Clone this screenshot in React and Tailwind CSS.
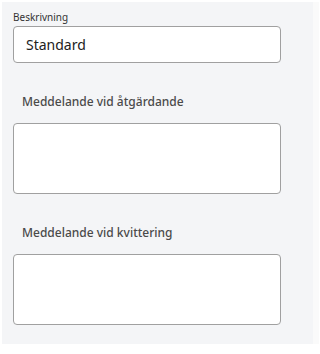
import React from 'react';

const font = { fontFamily: '"Segoe UI", "Noto Sans", "Open Sans", sans-serif' };

const MessageField = ({ label }) => (
  <div className="mt-[30px]">
    <div className="pl-[9px] text-[12px] font-medium leading-[18px] text-[#4a4a4a]">{label}</div>
    <textarea className="mt-[12px] block h-[71px] w-[268px] resize-none rounded-[4px] border border-[#a0a0a0] bg-white" />
  </div>
);

export default function App() {
  return (
    <div className="flex h-[354px] w-[319px] bg-white pt-[2px]" style={font}>
      <div className="ml-[2px] h-[342px] w-[311px] bg-[#f4f5f7] pl-[11px] pt-[8px]">
        <label className="block text-[10px] leading-[14px] text-[#333333]">Beskrivning</label>
        <input
          className="mt-[2px] block h-[37px] w-[268px] rounded-[4px] border border-[#a0a0a0] bg-white px-[12px] text-[14px] text-[#222222] outline-none"
          defaultValue="Standard"
        />
        <MessageField label="Meddelande vid åtgärdande" />
        <MessageField label="Meddelande vid kvittering" />
      </div>
      <div className="h-[342px] flex-1 bg-[#fafafa]" />
    </div>
  );
}
